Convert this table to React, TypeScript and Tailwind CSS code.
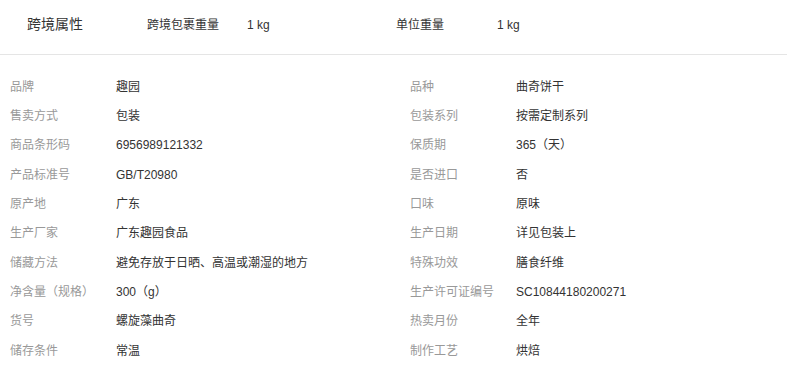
import React from "react";

const rows: [string, string, string, string][] = [
  ["品牌", "趣园", "品种", "曲奇饼干"],
  ["售卖方式", "包装", "包装系列", "按需定制系列"],
  ["商品条形码", "6956989121332", "保质期", "365（天）"],
  ["产品标准号", "GB/T20980", "是否进口", "否"],
  ["原产地", "广东", "口味", "原味"],
  ["生产厂家", "广东趣园食品", "生产日期", "详见包装上"],
  ["储藏方法", "避免存放于日晒、高温或潮湿的地方", "特殊功效", "膳食纤维"],
  ["净含量（规格）", "300（g）", "生产许可证编号", "SC10844180200271"],
  ["货号", "螺旋藻曲奇", "热卖月份", "全年"],
  ["储存条件", "常温", "制作工艺", "烘焙"],
];

export default function App() {
  return (
    <div
      className="w-[787px] h-[369px] bg-white overflow-hidden"
      style={{ fontFamily: '"Liberation Sans", "Noto Sans CJK SC", sans-serif' }}
    >
      <div className="h-[55px] border-b border-[#e5e5e5]">
        <div className="h-[49px] flex items-center pl-[27px] text-[#333]">
          <div className="w-[120px] text-[14px]">跨境属性</div>
          <div className="w-[249px] flex text-[12px]">
            <span className="w-[100px]">跨境包裹重量</span>
            <span>1 kg</span>
          </div>
          <div className="flex text-[12px]">
            <span className="w-[101px]">单位重量</span>
            <span>1 kg</span>
          </div>
        </div>
      </div>
      <div className="pt-[17px] text-[12px]">
        {rows.map((r, i) => (
          <div key={i} className="h-[29.35px] flex items-center pl-[10px]">
            <div className="w-[400px] flex">
              <span className="w-[106px] text-[#999]">{r[0]}</span>
              <span className="text-[#333]">{r[1]}</span>
            </div>
            <div className="flex">
              <span className="w-[106px] text-[#999]">{r[2]}</span>
              <span className="text-[#333]">{r[3]}</span>
            </div>
          </div>
        ))}
      </div>
    </div>
  );
}
